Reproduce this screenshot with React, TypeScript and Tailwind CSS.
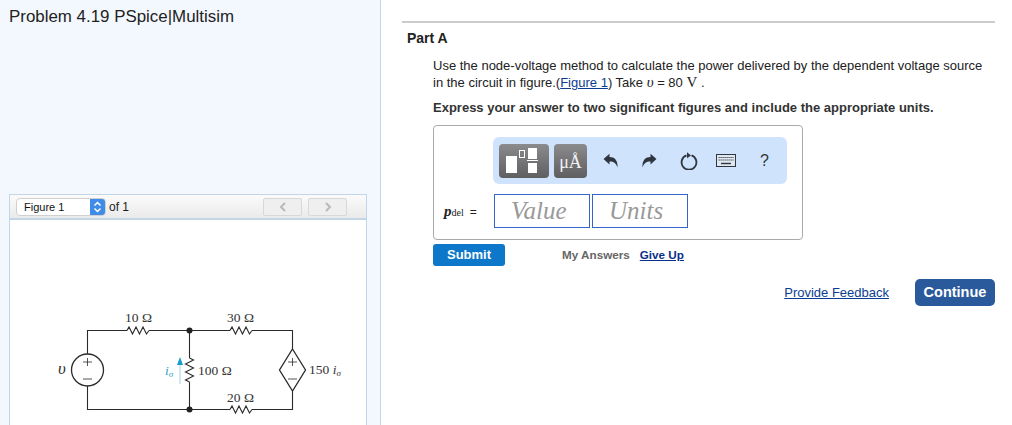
const sans = "font-['Liberation_Sans',Arial,sans-serif]";
const serif = "font-['Liberation_Serif','Times_New_Roman',serif]";

function zigzag(x: number, y: number) {
  return `M${x} ${y} l2 -3.5 l3.5 7 l3.5 -7 l3.5 7 l3.5 -7 l3.5 7 l2.5 -3.5`;
}

function Circuit() {
  return (
    <svg viewBox="10 220 356 205" className="h-[205px] w-[356px]">
      <g fill="none" stroke="#2a2a2a" strokeWidth="1.1">
        <path d="M87.5 354 V330.5 H127" />
        <path d={zigzag(127, 330.5)} />
        <path d="M149 330.5 H230" />
        <path d={zigzag(230, 330.5)} />
        <path d="M252 330.5 H292.5 V349" />
        <path d="M292.5 391 V409.5 H252" />
        <path d={zigzag(230, 409.5)} />
        <path d="M230 409.5 H87.5 V386" />
        <path d="M189.5 330.5 V358" />
        <path d="M189.5 382 V409.5" />
        <path d="M189.5 358 l4 2 l-8 4 l8 4 l-8 4 l8 4 l-8 4 l4 2" />
        <circle cx="87.5" cy="370" r="16" strokeWidth="1.3" />
        <path d="M292.5 349 L305.5 370 L292.5 391 L279.5 370 Z" strokeWidth="1.3" />
        <path d="M83 362 H92 M87.5 358 V366 M83 379 H92" strokeWidth="0.8" />
        <path d="M288 362 H297 M292.5 358 V366 M288 379 H297" strokeWidth="0.8" />
      </g>
      <circle cx="189.5" cy="330.5" r="3" fill="#222" />
      <circle cx="189.5" cy="409.5" r="3" fill="#222" />
      <path d="M180 384 V363" stroke="#a9def0" strokeWidth="1.2" />
      <path d="M180 357 L183 365 H177 Z" fill="#1a9cd0" />
      <g fill="#333" fontFamily="'Liberation Serif', serif" fontSize="13.5">
        <text x="125" y="322">10 Ω</text>
        <text x="227" y="322">30 Ω</text>
        <text x="227" y="402">20 Ω</text>
        <text x="198" y="375">100 Ω</text>
        <text x="309" y="374">150 <tspan fontStyle="italic">i</tspan><tspan fontStyle="italic" fontSize="9" dy="2">σ</tspan></text>
        <text x="58" y="374" fontStyle="italic" fontSize="17">υ</text>
      </g>
      <text x="165" y="375" fill="#2aa5c9" fontFamily="'Liberation Serif', serif" fontSize="13.5" fontStyle="italic">i<tspan fontSize="9" dy="2">σ</tspan></text>
    </svg>
  );
}

function FigureBar() {
  return (
    <div className="flex h-[25px] items-center border-b-2 border-[#c3d6e8] bg-gradient-to-b from-[#fbfbfb] to-[#eaeaea] pl-[6px] pr-[19px]">
      <div className="flex h-[18px] w-[90px] overflow-hidden rounded-[4px] border border-[#d0d0d0] bg-white">
        <span className="flex-1 pl-[7px] text-[11px] leading-[16px] text-[#111]">Figure 1</span>
        <span className="flex w-[15px] items-center justify-center bg-[#3f8be8]">
          <svg viewBox="0 0 9 12" className="h-[12px] w-[9px]" fill="none" stroke="#fff" strokeWidth="1.5">
            <path d="M1.5 4.5 L4.5 1.5 L7.5 4.5 M1.5 7.5 L4.5 10.5 L7.5 7.5" />
          </svg>
        </span>
      </div>
      <span className="ml-[3px] text-[12px] leading-[16px] text-[#222]">of 1</span>
      <div className="ml-auto flex gap-[6px]">
        <NavButton d="M6 1 L2 5 L6 9" />
        <NavButton d="M2 1 L6 5 L2 9" />
      </div>
    </div>
  );
}

function NavButton({ d }: { d: string }) {
  return (
    <span className="flex h-[18px] w-[39px] items-center justify-center rounded-[2px] border border-[#d8d8d8] bg-[#efefef]">
      <svg viewBox="0 0 8 10" className="h-[10px] w-[8px]" fill="none" stroke="#b9b9b9" strokeWidth="2">
        <path d={d} />
      </svg>
    </span>
  );
}

function Toolbar() {
  return (
    <div className="ml-[59px] flex h-[47px] w-[294px] items-center rounded-[6px] bg-[#cfe4fc] pl-[6px]">
      <div className="relative h-[34px] w-[50px] rounded-[4px] bg-gradient-to-b from-[#8b8b8d] to-[#5f5f61]">
        <span className="absolute left-[7px] top-[12px] h-[17px] w-[11px] bg-white" />
        <span className="absolute left-[20px] top-[6px] h-[8px] w-[6px] border border-white" />
        <span className="absolute left-[29px] top-[4px] h-[11px] w-[9px] bg-white" />
        <span className="absolute left-[28px] top-[16px] h-[1px] w-[11px] bg-white" />
        <span className="absolute left-[29px] top-[19px] h-[10px] w-[9px] bg-white" />
      </div>
      <div className={`${serif} ml-[5px] flex h-[34px] w-[33px] items-end justify-center rounded-[4px] bg-gradient-to-b from-[#8b8b8d] to-[#5f5f61] pb-[6px] text-[18px] leading-[20px] text-[#f2f2f2]`}>
        μÅ
      </div>
      <svg viewBox="0 0 16 16" className="ml-[16px] h-[16px] w-[16px]" fill="#2f3640">
        <path d="M0.5 6 L6.5 0.8 V4 C11.5 4 15 7 14.5 14.5 C13 10.5 11 8.6 6.5 8.6 V11.5 Z" />
      </svg>
      <svg viewBox="0 0 16 16" className="ml-[22px] h-[16px] w-[16px]" fill="#2f3640">
        <path d="M15.5 6 L9.5 0.8 V4 C4.5 4 1 7 1.5 14.5 C3 10.5 5 8.6 9.5 8.6 V11.5 Z" />
      </svg>
      <svg viewBox="0 0 18 18" className="ml-[23px] h-[18px] w-[18px]" fill="none" stroke="#2f3640" strokeWidth="1.8">
        <path d="M11.5 3.3 A7.4 7.4 0 1 1 6.5 3.3" />
        <path d="M7 0.2 L11 3.4 L7 6.2 Z" fill="#2f3640" stroke="none" />
      </svg>
      <svg viewBox="0 0 20 13" className="ml-[18px] h-[13px] w-[20px]" fill="none" stroke="#2f3640">
        <rect x="0.5" y="0.5" width="19" height="12" fill="#dfe7f0" />
        <path d="M2.5 3.5 H17.5 M2.5 6 H17.5" strokeDasharray="1.2 0.8" />
        <path d="M5 9.5 H15" strokeWidth="1.4" />
      </svg>
      <span className="ml-[24px] text-[16px] leading-[18px] text-[#333]">?</span>
    </div>
  );
}

function AnswerBox() {
  return (
    <div className="ml-[31px] mt-[10px] h-[115px] w-[370px] rounded-[4px] border border-[#aaa] bg-white pt-[11px]">
      <Toolbar />
      <div className="mt-[10px] flex items-center">
        <span className={`${serif} ml-[10px] w-[50px] text-[#222]`}>
          <i className="text-[15px] font-bold">p</i>
          <span className="text-[10px]">del</span>
          <span className={`${sans} ml-[6px] text-[12px]`}>=</span>
        </span>
        <Field label="Value" />
        <Field label="Units" className="ml-[2px]" />
      </div>
    </div>
  );
}

function Field({ label, className = "" }: { label: string; className?: string }) {
  return (
    <span className={`${serif} ${className} flex h-[34px] w-[96px] items-center border border-[#3366cc] pl-[16px] text-[25px] italic text-[#999]`}>
      {label}
    </span>
  );
}

export default function App() {
  return (
    <div className={`${sans} flex h-[425px] w-[1012px] overflow-hidden bg-white`}>
      {/* Figure column */}
      <div className="flex h-full w-[381px] shrink-0 flex-col border-r border-[#c3d6e8] bg-[#f3f8fe]">
        <h1 className="pl-[9px] pt-[8px] text-[16.9px] leading-[18px] text-[#222]">Problem 4.19 PSpice|Multisim</h1>
        <div className="ml-[9px] mt-[168px] w-[358px] flex-1 border-x border-t border-[#c3d6e8] bg-white">
          <FigureBar />
          <Circuit />
        </div>
      </div>

      {/* Question column */}
      <div className="flex-1 pl-[21px] pr-[17px] pt-[21px]">
        <div className="h-[2px] bg-[#ccc]" />
        <h2 className="ml-[5px] mt-[7px] text-[14px] font-bold leading-[16px] text-[#222]">Part A</h2>
        <p className="ml-[31px] mt-[12px] text-[13px] leading-[16px] text-[#222]">
          Use the node-voltage method to calculate the power delivered by the dependent voltage source
          <br />
          in the circuit in figure.(<a className="text-[#0a3d91] underline">Figure 1</a>) Take <i className={`${serif} text-[15px]`}>υ</i> = 80 <span className={`${serif} text-[15px]`}>V</span> .
        </p>
        <p className="ml-[31px] mt-[9px] text-[13px] font-bold leading-[15px] text-[#333]">
          Express your answer to two significant figures and include the appropriate units.
        </p>
        <AnswerBox />
        <div className="ml-[31px] mt-[4px] flex h-[22px] items-center">
          <span className="flex h-[22px] w-[72px] items-center justify-center rounded-[3px] bg-[#0d77c9] text-[13px] font-bold text-white">Submit</span>
          <span className="ml-[57px] text-[11.7px] font-bold text-[#666]">My Answers</span>
          <a className="ml-[10px] text-[11.7px] font-bold text-[#0a2f8a] underline">Give Up</a>
        </div>
        <div className="mt-[13px] flex h-[27px] items-center justify-end">
          <a className="text-[13px] text-[#0a3d91] underline">Provide Feedback</a>
          <span className="ml-[26px] flex h-[27px] w-[80px] items-center justify-center rounded-[5px] bg-[#2a5a9b] text-[14.5px] font-bold text-white">Continue</span>
        </div>
      </div>
    </div>
  );
}
